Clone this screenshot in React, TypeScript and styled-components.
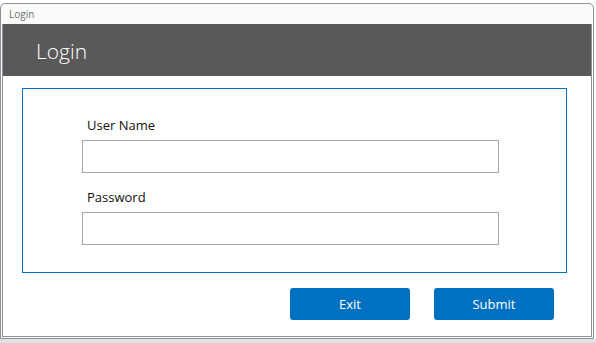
import React from 'react';
import styled, { createGlobalStyle } from 'styled-components';

const GlobalStyle = createGlobalStyle`
  html, body {
    margin: 0;
    padding: 0;
    background: #ffffff;
  }
  body {
    font-family: "Open Sans", "Noto Sans", Arial, sans-serif;
  }
  * {
    box-sizing: border-box;
  }
`;

const Page = styled.div`
  width: 596px;
  height: 343px;
  display: flex;
  flex-direction: column;
  padding-top: 3px;
`;

const Window = styled.div`
  width: 594px;
  height: 336px;
  display: flex;
  flex-direction: column;
  background: #fafafa;
  border: 1px solid #8e9196;
  border-radius: 5px 5px 0 0;
`;

const TitleBar = styled.div`
  height: 20px;
  padding-left: 8px;
  font-size: 10px;
  line-height: 20px;
  color: #6d6d6d;
`;

const Frame = styled.div`
  flex: 1;
  display: flex;
  flex-direction: column;
  margin: 0 1px 1px;
  background: #ffffff;
  border: 1px solid #8e9196;
  border-top: none;
`;

const Header = styled.div`
  height: 52px;
  padding: 2px 0 0 33px;
  background: #595959;
`;

const HeaderTitle = styled.h1`
  margin: 0;
  font-size: 21px;
  font-weight: 300;
  line-height: 50px;
  color: #ffffff;
`;

const Content = styled.div`
  padding: 12px 24px 0 19px;
`;

const FormBox = styled.div`
  height: 185px;
  display: flex;
  flex-direction: column;
  gap: 14px;
  padding: 26px 0 0 59px;
  border: 1px solid #0070c0;
`;

const Field = styled.div`
  display: flex;
  flex-direction: column;
`;

const Label = styled.label`
  margin: 0 0 5px 5px;
  font-size: 13px;
  line-height: 20px;
  color: #111111;
`;

const TextInput = styled.input`
  width: 417px;
  height: 33px;
  margin: 0;
  padding: 0 8px;
  border: 1px solid #a6a6a6;
  border-radius: 0;
  background: #ffffff;
  font-family: inherit;
  font-size: 13px;
  outline: none;
`;

const Actions = styled.div`
  display: flex;
  justify-content: flex-end;
  gap: 24px;
  margin-top: 15px;
  padding-right: 13px;
`;

const Button = styled.button`
  width: 120px;
  height: 32px;
  padding: 0;
  border: none;
  border-radius: 3px;
  background: #0070c0;
  color: #ffffff;
  font-family: inherit;
  font-size: 13px;
  line-height: 32px;
  cursor: pointer;
`;

const BottomStrip = styled.div`
  flex: 1;
  background: #dee2e6;
`;

const App = () => {
  return (
    <>
      <GlobalStyle />
      <Page>
        <Window>
          <TitleBar>Login</TitleBar>
          <Frame>
            <Header>
              <HeaderTitle>Login</HeaderTitle>
            </Header>
            <Content>
              <FormBox>
                <Field>
                  <Label htmlFor="username">User Name</Label>
                  <TextInput id="username" type="text" />
                </Field>
                <Field>
                  <Label htmlFor="password">Password</Label>
                  <TextInput id="password" type="password" />
                </Field>
              </FormBox>
              <Actions>
                <Button type="button">Exit</Button>
                <Button type="submit">Submit</Button>
              </Actions>
            </Content>
          </Frame>
        </Window>
        <BottomStrip />
      </Page>
    </>
  );
};

export default App;
